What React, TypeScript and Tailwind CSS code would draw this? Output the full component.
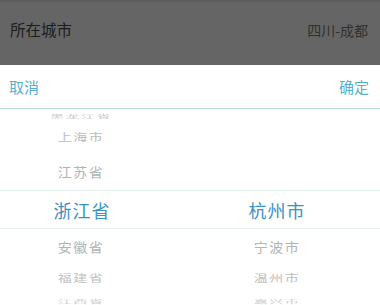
const font = { fontFamily: '"Noto Sans CJK SC", "Noto Sans", sans-serif' }

const rows = [
  { left: '黑龙江省', right: '', h: 'h-[13px]', scale: 'scale-y-[0.3]', size: 'text-[14px]', color: 'text-[#c8c8c8]' },
  { left: '上海市', right: '', h: 'h-[30px]', scale: 'scale-y-[0.72]', size: 'text-[14px]', color: 'text-[#bcbcbc]' },
  { left: '江苏省', right: '', h: 'h-[38px]', scale: 'scale-y-[0.92]', size: 'text-[14px]', color: 'text-[#b3b3b3]' },
]

const after = [
  { left: '安徽省', right: '宁波市', h: 'h-[34px]', scale: 'scale-y-[0.92]', size: 'text-[14px]', color: 'text-[#b3b3b3]' },
  { left: '福建省', right: '温州市', h: 'h-[29px]', scale: 'scale-y-[0.7]', size: 'text-[14px]', color: 'text-[#bebebe]' },
  { left: '江西省', right: '嘉兴市', h: 'h-[18px]', scale: 'scale-y-[0.35]', size: 'text-[14px]', color: 'text-[#cccccc]' },
]

function Row({ r }: { r: (typeof rows)[number] }) {
  return (
    <div className={`flex items-center ${r.h} ${r.color} ${r.size}`}>
      <div className={`w-[162px] text-center tracking-[1.5px] leading-none ${r.scale}`}>{r.left}</div>
      <div className={`ml-[34px] w-[162px] text-center tracking-[1.5px] leading-none ${r.scale}`}>{r.right}</div>
    </div>
  )
}

export default function App() {
  return (
    <div className="w-[380px] h-[305px] overflow-hidden bg-white" style={font}>
      {/* dimmed form row */}
      <div className="h-[65px] bg-[#656565] border-t-2 border-[#5c5c5c] flex items-start justify-between px-[10px] pt-[17px]">
        <span className="text-[15.5px] text-[#1c1c1c] leading-[20px]">所在城市</span>
        <span className="text-[14px] text-[#303030] leading-[20px] pt-[1px] pr-[2px]">四川-成都</span>
      </div>

      {/* picker toolbar */}
      <div className="h-[44px] flex items-center justify-between px-[9px] border-b border-[#b5dae3]">
        <span className="text-[15px] text-[#55afcf] leading-none">取消</span>
        <span className="text-[15px] text-[#55afcf] leading-none pr-[2px]">确定</span>
      </div>

      {/* wheels */}
      <div className="flex flex-col">
        {rows.map((r, i) => (
          <Row key={i} r={r} />
        ))}
        <div className="h-[39px] flex items-center border-y border-[#e6eff1] text-[18px] text-[#3b92c2]">
          <div className="w-[162px] text-center tracking-[1px] leading-none pl-[2px]">浙江省</div>
          <div className="ml-[34px] w-[162px] text-center tracking-[1px] leading-none">杭州市</div>
        </div>
        {after.map((r, i) => (
          <Row key={i} r={r} />
        ))}
      </div>
    </div>
  )
}
